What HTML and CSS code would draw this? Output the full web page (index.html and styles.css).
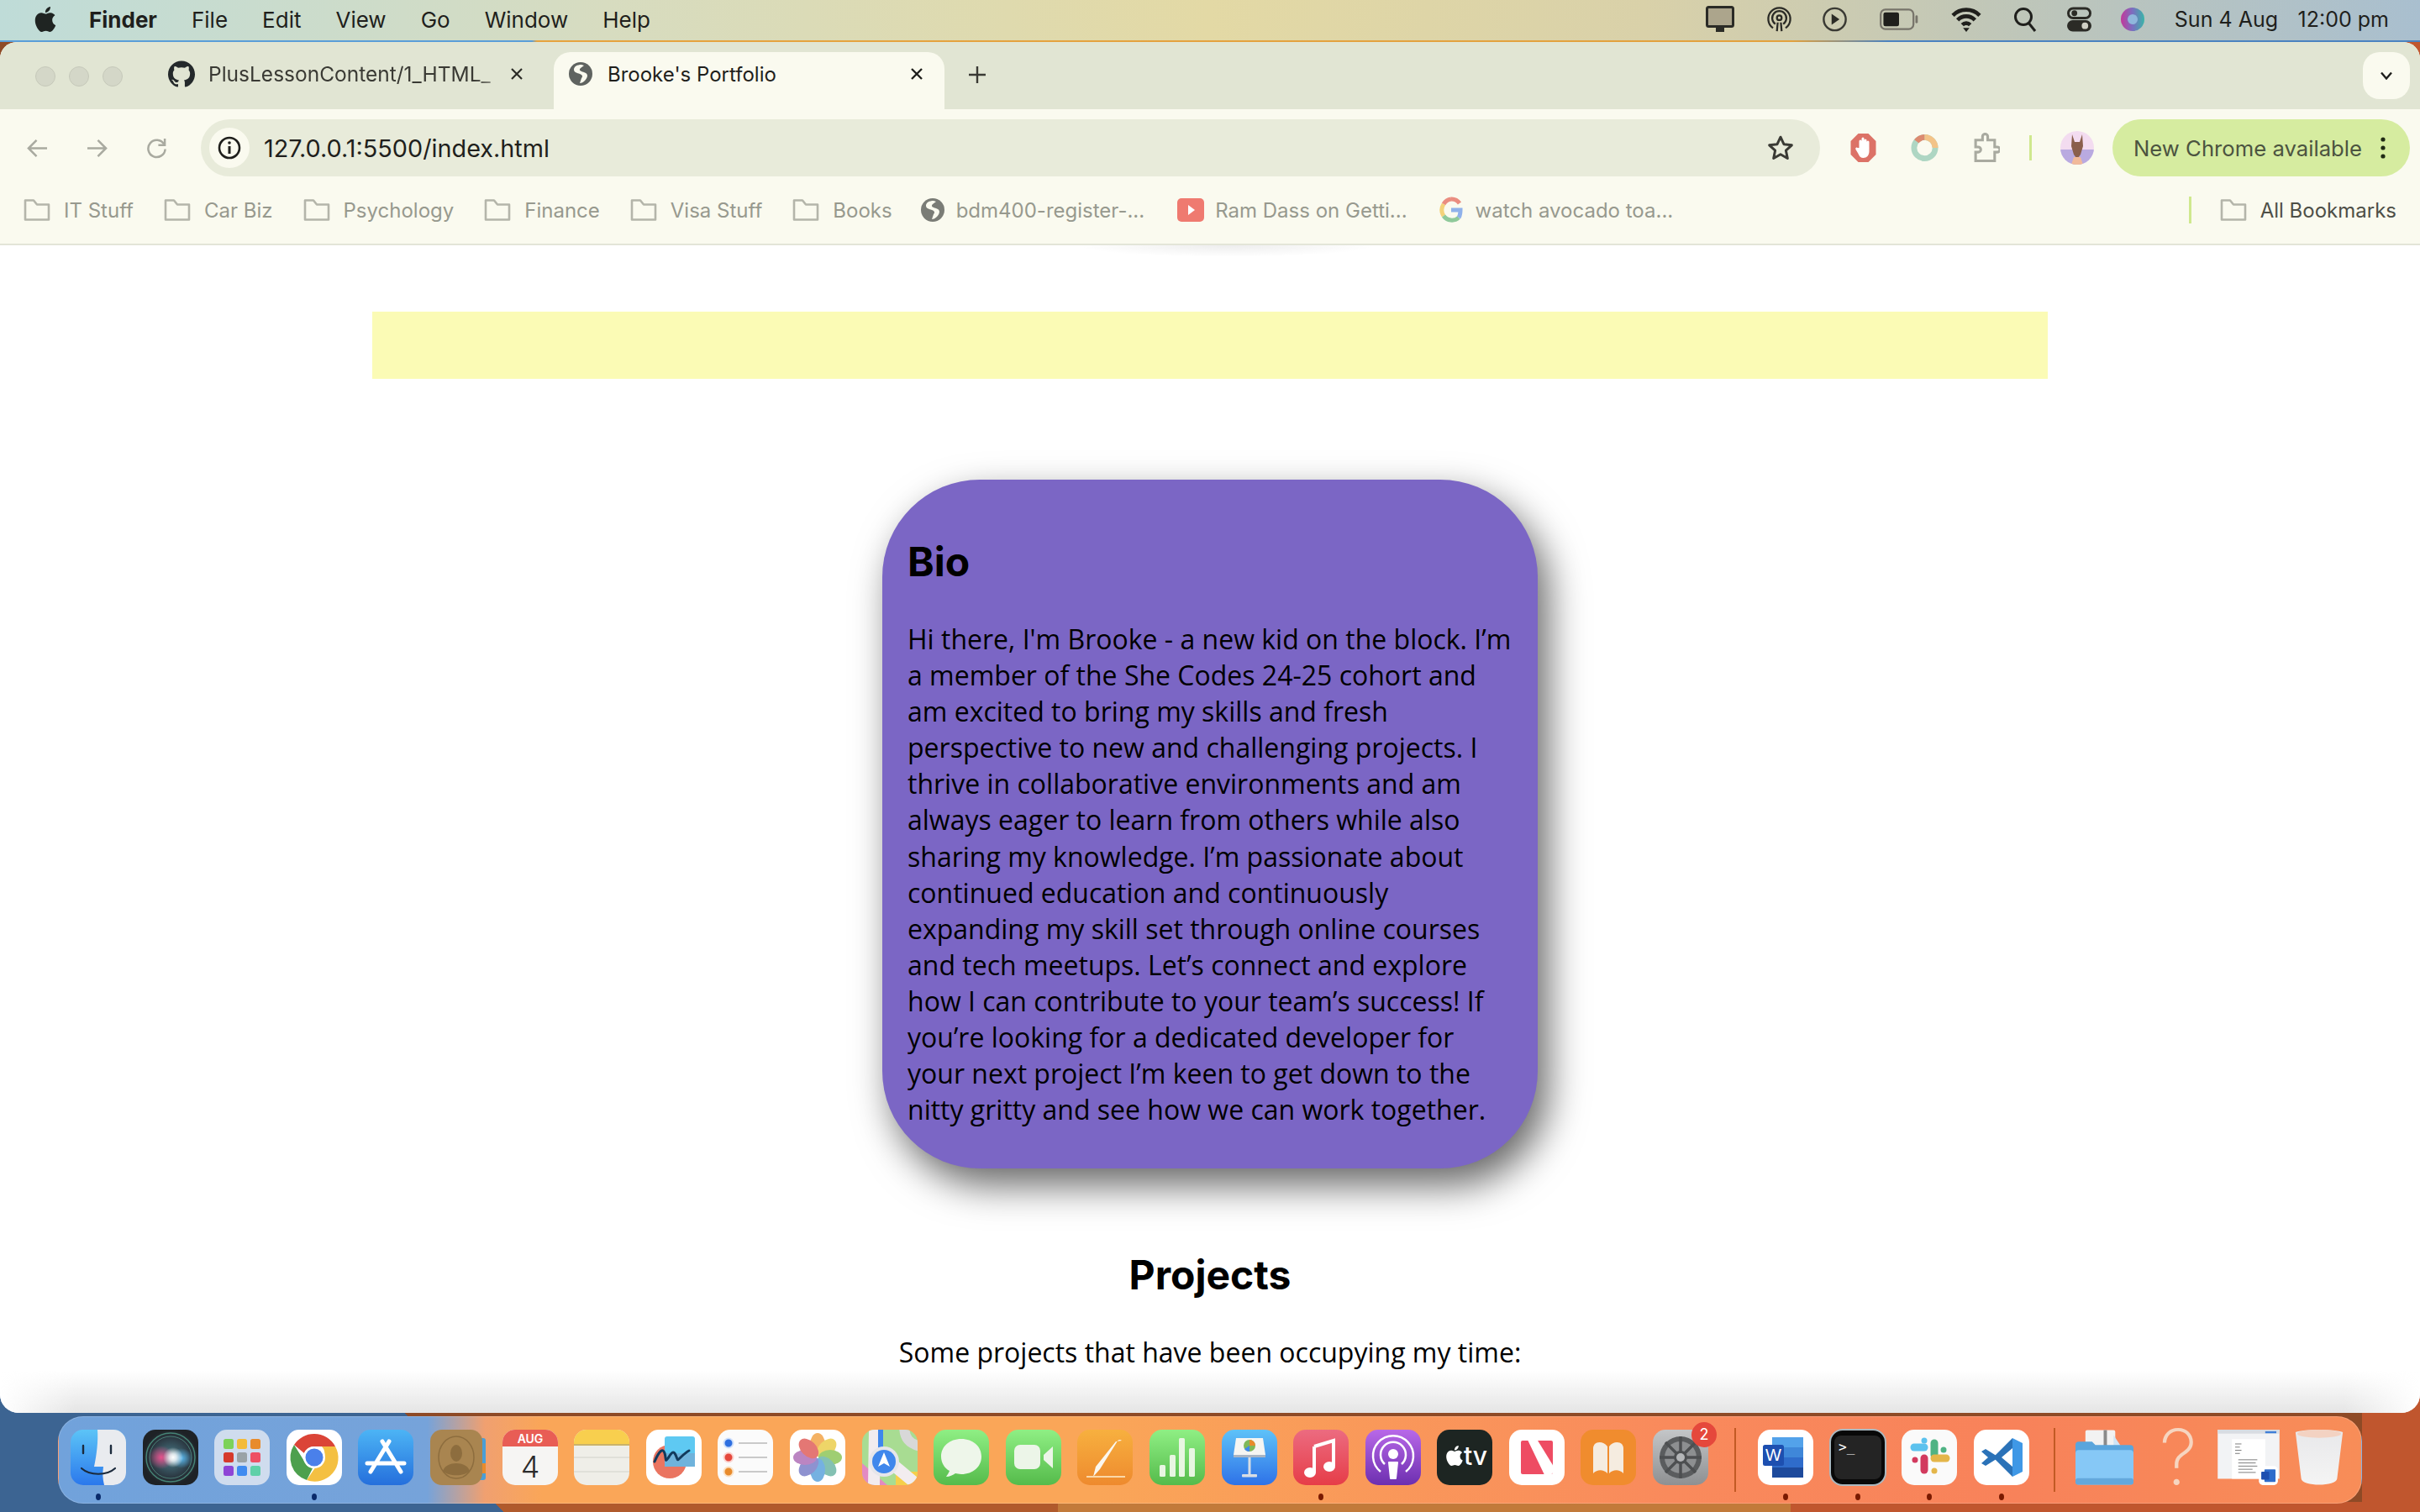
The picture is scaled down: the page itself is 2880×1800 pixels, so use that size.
FILE: index.html
```html
<!DOCTYPE html>
<html lang="en">

<head>
    <meta charset="UTF-8">
    <title>Brooke's Portfolio</title>
    <link rel="stylesheet" href="styles.css">
</head>

<body>
    <svg class="defs" width="0" height="0">
        <symbol id="folder" viewBox="0 0 32 32">
            <path d="M2 4.5h10l4 5h14v18H2z" fill="none" stroke="currentColor" stroke-width="2.6" stroke-linejoin="round"/>
        </symbol>
        <symbol id="globe" viewBox="0 0 28 28">
            <circle cx="14" cy="14" r="14" fill="currentColor"/>
            <path d="M15 3c-5 0-9 2-9 6 0 3 4 4 7 5 3 1 4 3 2 5l-2 6c4 0 9-5 9-9 0-3-4-4-7-5-2-1-3-2-1-4l4-3z" fill="#fafaef"/>
        </symbol>
    </svg>

    <!-- menu bar -->
    <div class="menubar">
        <div class="menu-left">
            <svg class="apple" viewBox="0 0 24 24"><path d="M12.152 6.896c-.948 0-2.415-1.078-3.96-1.04-2.04.027-3.91 1.183-4.961 3.014-2.117 3.675-.546 9.103 1.519 12.09 1.013 1.454 2.208 3.09 3.792 3.039 1.52-.065 2.09-.987 3.935-.987 1.831 0 2.35.987 3.96.948 1.637-.026 2.676-1.48 3.676-2.948 1.156-1.688 1.636-3.325 1.662-3.415-.039-.013-3.182-1.221-3.22-4.857-.026-3.04 2.48-4.494 2.597-4.559-1.429-2.09-3.623-2.324-4.39-2.376-2-.156-3.675 1.09-4.61 1.09zM15.53 3.83c.843-1.012 1.4-2.427 1.245-3.83-1.207.052-2.662.805-3.532 1.818-.78.896-1.454 2.338-1.273 3.714 1.338.104 2.715-.688 3.559-1.701"/></svg>
            <span class="menu-app">Finder</span>
            <span>File</span>
            <span>Edit</span>
            <span>View</span>
            <span>Go</span>
            <span>Window</span>
            <span>Help</span>
        </div>
        <div class="menu-right">
            <svg class="st-display" viewBox="0 0 34 32"><rect x="1.5" y="1.5" width="31" height="23" rx="2" fill="#aca58c" stroke="#2b2b26" stroke-width="3"/><rect x="12" y="25" width="10" height="6" fill="#2b2b26"/></svg>
            <svg class="st-air" viewBox="0 0 32 32" fill="none" stroke="#2b2b26" stroke-width="2.4"><circle cx="16" cy="14" r="3"/><path d="M11 22a9 9 0 1 1 10 0M8 27a14 14 0 1 1 16 0"/><path d="M14 20l-1 11M18 20l1 11"/></svg>
            <svg class="st-play" viewBox="0 0 32 32"><circle cx="16" cy="16" r="14" fill="none" stroke="#3a3a34" stroke-width="2.6"/><path d="M12 9l10 7-10 7z" fill="#2b2b26"/></svg>
            <svg class="st-battery" viewBox="0 0 50 28"><rect x="1.5" y="1.5" width="42" height="25" rx="6" fill="none" stroke="#77746a" stroke-width="2.4"/><rect x="5" y="5" width="20" height="18" rx="2.5" fill="#1f1f1c"/><rect x="46" y="9" width="3" height="10" rx="1.5" fill="#77746a"/></svg>
            <svg class="st-wifi" viewBox="0 0 40 32" fill="none" stroke="#1f1f1c" stroke-width="5"><path d="M3 11a24 24 0 0 1 34 0M9 17a15 15 0 0 1 22 0M15 23a7 7 0 0 1 10 0"/><path d="M16 27h8l-4 5z" fill="#1f1f1c" stroke="none"/></svg>
            <svg class="st-search" viewBox="0 0 28 30" fill="none" stroke="#1f1f1c" stroke-width="3"><circle cx="12" cy="12" r="9.5"/><path d="M18 19l8 10"/></svg>
            <svg class="st-control" viewBox="0 0 30 30"><rect x="1.5" y="1.5" width="27" height="12" rx="6" fill="none" stroke="#2b2b26" stroke-width="3"/><circle cx="9" cy="7.5" r="3.5" fill="#2b2b26"/><rect y="16" width="30" height="14" rx="7" fill="#2b2b26"/><circle cx="22" cy="23" r="4" fill="#cfcfc4"/></svg>
            <svg class="st-siri" viewBox="0 0 28 30"><defs><linearGradient id="siriBar" x1="0" x2="1"><stop offset="0" stop-color="#c2399b"/><stop offset=".5" stop-color="#7a6fc0"/><stop offset="1" stop-color="#38b5a8"/></linearGradient></defs><circle cx="14" cy="15" r="14" fill="url(#siriBar)"/><circle cx="14" cy="15" r="6" fill="#8fb7dc"/></svg>
            <span class="clock">Sun 4 Aug</span>
            <span>12:00 pm</span>
        </div>
    </div>

    <div class="window">
        <!-- tabs -->
        <div class="tabstrip">
            <div class="lights"><i></i><i></i><i></i></div>
            <div class="tab">
                <svg class="tab-icon" viewBox="0 0 24 24"><path fill="#24292b" d="M12 .297c-6.63 0-12 5.373-12 12 0 5.303 3.438 9.8 8.205 11.385.6.113.82-.258.82-.577 0-.285-.01-1.04-.015-2.04-3.338.724-4.042-1.61-4.042-1.61C4.422 18.07 3.633 17.7 3.633 17.7c-1.087-.744.084-.729.084-.729 1.205.084 1.838 1.236 1.838 1.236 1.07 1.835 2.809 1.305 3.495.998.108-.776.417-1.305.76-1.605-2.665-.3-5.466-1.332-5.466-5.93 0-1.31.465-2.38 1.235-3.22-.135-.303-.54-1.523.105-3.176 0 0 1.005-.322 3.3 1.23.96-.267 1.98-.399 3-.405 1.02.006 2.04.138 3 .405 2.28-1.552 3.285-1.23 3.285-1.23.645 1.653.24 2.873.12 3.176.765.84 1.23 1.91 1.23 3.22 0 4.61-2.805 5.625-5.475 5.92.42.36.81 1.096.81 2.22 0 1.606-.015 2.896-.015 3.286 0 .315.21.69.825.57C20.565 22.092 24 17.592 24 12.297c0-6.627-5.373-12-12-12"/></svg>
                <span class="tab-title tab-title-fade">PlusLessonContent/1_HTML_</span>
                <svg class="tab-close" viewBox="0 0 16 16"><path d="M2 2l12 12M14 2L2 14" stroke="#2b2b26" stroke-width="2.2"/></svg>
            </div>
            <div class="tab tab-active">
                <svg class="tab-icon tab-globe"><use href="#globe"/></svg>
                <span class="tab-title">Brooke's Portfolio</span>
                <svg class="tab-close" viewBox="0 0 16 16"><path d="M2 2l12 12M14 2L2 14" stroke="#1f1f1c" stroke-width="2.4"/></svg>
            </div>
            <svg class="tab-new" viewBox="0 0 22 22"><path d="M11 1v20M1 11h20" stroke="#3a3a34" stroke-width="2.4"/></svg>
            <div class="tab-search">
                <svg viewBox="0 0 16 10"><path d="M2 1.5l6 7 6-7" fill="none" stroke="#1f1f1c" stroke-width="2.4"/></svg>
            </div>
        </div>

        <!-- toolbar -->
        <div class="toolbar">
            <svg class="nav-btn" viewBox="0 0 26 24" fill="none" stroke="#a9aaa0" stroke-width="2.6"><path d="M25 12H3M12 2L2 12l10 10"/></svg>
            <svg class="nav-btn" viewBox="0 0 26 24" fill="none" stroke="#a9aaa0" stroke-width="2.6"><path d="M1 12h22M14 2l10 10-10 10"/></svg>
            <svg class="nav-btn" viewBox="0 0 26 26" fill="none" stroke="#a9aaa0" stroke-width="2.6"><path d="M22 8a10.5 10.5 0 1 0 1.5 6"/><path d="M23 1v8h-8"/></svg>
            <div class="omnibox">
                <span class="site-info">
                    <svg viewBox="0 0 28 28"><circle cx="14" cy="14" r="12" fill="none" stroke="#1f1f1c" stroke-width="2.6"/><path d="M14 12v9" stroke="#1f1f1c" stroke-width="3"/><circle cx="14" cy="8" r="1.8" fill="#1f1f1c"/></svg>
                </span>
                <span class="url">127.0.0.1:5500/index.html</span>
                <svg class="star" viewBox="0 0 30 30"><path d="M15 3l3.7 8 8.8 1-6.5 6 1.8 8.7L15 22.3 7.2 26.7 9 18l-6.5-6 8.8-1z" fill="none" stroke="#3a3a34" stroke-width="2.8" stroke-linejoin="round"/></svg>
            </div>
            <div class="extensions">
                <svg viewBox="0 0 32 36"><path d="M10 1h12l9 9v16l-9 9H10l-9-9V10z" fill="#dc7267"/><path d="M11 18v-8a1.500 1.500 0 0 1 3 0V7a1.500 1.500 0 0 1 3 0v2a1.500 1.500 0 0 1 3 0v2a1.500 1.500 0 0 1 3 0v11c0 5-3 8-7 8-3 0-5-2-6-5l-3-5c-1-2 1-3 2-2z" fill="#fff"/></svg>
                <svg viewBox="0 0 34 34" fill="none" stroke-width="7"><circle cx="17" cy="17" r="13" stroke="#aed6c3"/><path d="M7 9a13 13 0 0 1 10-5" stroke="#dc8a70"/><path d="M17 4a13 13 0 0 1 13 13" stroke="#f3c388"/></svg>
                <svg viewBox="0 0 32 34" fill="none" stroke="#a9aaa0" stroke-width="3"><path d="M4 8h8V4a3 3 0 0 1 6 0v4h8v8h3a3 3 0 0 1 0 6h-3v10H4V22h3a3 3 0 0 0 0-6H4z"/></svg>
                <i class="toolbar-sep"></i>
                <svg class="avatar" viewBox="0 0 40 40"><defs><clipPath id="avClip"><circle cx="20" cy="20" r="20"/></clipPath></defs><g clip-path="url(#avClip)"><rect width="40" height="40" fill="#f3dcf0"/><rect y="22" width="40" height="18" fill="#b9aae0"/><path d="M14 4l3 9h6l3-9 1 14-3 10-3 4h-2l-3-4-3-10z" fill="#8a5f4c"/><path d="M16 31h8l3 9H13z" fill="#f1b99a"/></g></svg>
            </div>
            <div class="update-pill">
                <span>New Chrome available</span>
                <svg viewBox="0 0 6 26"><circle cx="3" cy="3" r="2.6"/><circle cx="3" cy="13" r="2.6"/><circle cx="3" cy="23" r="2.6"/></svg>
            </div>
        </div>

        <!-- bookmarks -->
        <div class="bookmarks">
            <span class="bm"><svg class="bm-icon"><use href="#folder"/></svg>IT Stuff</span>
            <span class="bm"><svg class="bm-icon"><use href="#folder"/></svg>Car Biz</span>
            <span class="bm"><svg class="bm-icon"><use href="#folder"/></svg>Psychology</span>
            <span class="bm"><svg class="bm-icon"><use href="#folder"/></svg>Finance</span>
            <span class="bm"><svg class="bm-icon"><use href="#folder"/></svg>Visa Stuff</span>
            <span class="bm"><svg class="bm-icon"><use href="#folder"/></svg>Books</span>
            <span class="bm"><svg class="bm-icon bm-globe"><use href="#globe"/></svg>bdm400-register-...</span>
            <span class="bm"><svg class="bm-icon bm-yt" viewBox="0 0 32 28"><rect width="32" height="28" rx="5" fill="#ef7a70"/><path d="M13 8l8 6-8 6z" fill="#fff"/></svg>Ram Dass on Getti...</span>
            <span class="bm"><svg class="bm-icon bm-g" viewBox="0 0 28 32" fill="none" stroke-width="5"><path d="M24 8a11.500 11.500 0 0 0-10-5" stroke="#ea8d80"/><path d="M14 3a12 12 0 0 0-9 6" stroke="#ea8d80"/><path d="M5 9a13 13 0 0 0 0 14" stroke="#f3d27a"/><path d="M5 23a12 12 0 0 0 18 2" stroke="#8fc99a"/><path d="M23 25c2-3 2-6 2-9H14" stroke="#8fb1ea"/></svg>watch avocado toa...</span>
            <div class="bm-right">
                <i class="bm-sep"></i>
                <span class="bm bm-all"><svg class="bm-icon"><use href="#folder"/></svg>All Bookmarks</span>
            </div>
        </div>

        <!-- page -->
        <div class="page">
            <div class="nav-shadow"></div>
            <div class="banner"></div>
            <section class="bio-card">
                <h2 class="bio-title">Bio</h2>
                <p class="bio-text">Hi there, I'm Brooke - a new kid on the block. I’m a member of the She Codes 24-25 cohort and am excited to bring my skills and fresh perspective to new and challenging projects. I thrive in collaborative environments and am always eager to learn from others while also sharing my knowledge. I’m passionate about continued education and continuously expanding my skill set through online courses and tech meetups. Let’s connect and explore how I can contribute to your team’s success! If you’re looking for a dedicated developer for your next project I’m keen to get down to the nitty gritty and see how we can work together.</p>
            </section>
            <h2 class="projects-title">Projects</h2>
            <p class="projects-text">Some projects that have been occupying my time:</p>
            <div class="page-fade"></div>
        </div>
    </div>

    <!-- dock -->
    <div class="dock">
        <div class="dock-item running"><svg viewBox="0 0 66 66"><defs><linearGradient id="fin" x1="0" y1="0" x2="0" y2="1"><stop offset="0" stop-color="#5cc4f7"/><stop offset="1" stop-color="#2b78ec"/></linearGradient></defs><rect width="66" height="66" rx="15" fill="url(#fin)"/><path d="M32 0h19a15 15 0 0 1 15 15v36a15 15 0 0 1-15 15H40c-2-8-2-14-1-22H28c3-14 5-30 4-44z" fill="#e9ebef"/><path d="M15 19v9M48 19v9" stroke="#1b2a3c" stroke-width="2.4" stroke-linecap="round"/><path d="M13 46c10 9 30 9 40 0" fill="none" stroke="#1b2a3c" stroke-width="2.2" stroke-linecap="round"/></svg></div>
        <div class="dock-item"><svg viewBox="0 0 66 66"><defs><radialGradient id="siriBg"><stop offset="0" stop-color="#4a7f8c"/><stop offset=".7" stop-color="#2c3a44"/><stop offset="1" stop-color="#1e2226"/></radialGradient><radialGradient id="siriPink"><stop offset="0" stop-color="#e8508c"/><stop offset="1" stop-color="#e8508c" stop-opacity="0"/></radialGradient><radialGradient id="siriBlue"><stop offset="0" stop-color="#58b4ea"/><stop offset="1" stop-color="#58b4ea" stop-opacity="0"/></radialGradient><radialGradient id="siriGlow"><stop offset="0" stop-color="#fff"/><stop offset=".35" stop-color="#fff" stop-opacity=".8"/><stop offset="1" stop-color="#fff" stop-opacity="0"/></radialGradient></defs><rect width="66" height="66" rx="15" fill="url(#siriBg)"/><circle cx="33" cy="33" r="29" fill="none" stroke="#4f9a86" stroke-width="1.500" opacity=".8"/><circle cx="33" cy="33" r="25" fill="none" stroke="#5fae9a" stroke-width="1" opacity=".6"/><ellipse cx="22" cy="33" rx="15" ry="14" fill="url(#siriPink)"/><ellipse cx="46" cy="34" rx="13" ry="12" fill="url(#siriBlue)"/><circle cx="36" cy="33" r="12" fill="url(#siriGlow)"/></svg></div>
        <div class="dock-item"><svg viewBox="0 0 66 66"><rect width="66" height="66" rx="15" fill="#cfdcee"/><rect x="11" y="11" width="12" height="12" rx="2.500" fill="#7cd25a"/><rect x="27" y="11" width="12" height="12" rx="2.500" fill="#f3bb3a"/><rect x="43" y="11" width="12" height="12" rx="2.500" fill="#e88b2c"/><rect x="11" y="27" width="12" height="12" rx="2.500" fill="#d63a2c"/><rect x="27" y="27" width="12" height="12" rx="2.500" fill="#9aa3a6"/><rect x="43" y="27" width="12" height="12" rx="2.500" fill="#ee4f63"/><rect x="11" y="43" width="12" height="12" rx="2.500" fill="#8e45d6"/><rect x="27" y="43" width="12" height="12" rx="2.500" fill="#3f8bf0"/><rect x="43" y="43" width="12" height="12" rx="2.500" fill="#5fd0a8"/></svg></div>
        <div class="dock-item running"><svg viewBox="0 0 66 66"><rect width="66" height="66" rx="15" fill="#fff"/><path d="M33 5a28 28 0 0 1 25 15H33a13 13 0 0 0-12 8L9 18A28 28 0 0 1 33 5z" fill="#db4437"/><path d="M9 18l13 21a13 13 0 0 0 9 7L24 60A28 28 0 0 1 9 18z" fill="#4da04e"/><path d="M58 20a28 28 0 0 1-34 40l13-19a13 13 0 0 0 5-21z" fill="#f4c042"/><circle cx="33" cy="33" r="13" fill="#fff"/><circle cx="33" cy="33" r="10.500" fill="#4a80ea"/></svg></div>
        <div class="dock-item"><svg viewBox="0 0 66 66"><defs><linearGradient id="app" x1="0" y1="0" x2="0" y2="1"><stop offset="0" stop-color="#4cb4f5"/><stop offset="1" stop-color="#256fdc"/></linearGradient></defs><rect width="66" height="66" rx="15" fill="url(#app)"/><path d="M29 14l22 36M37 14L15 50M11 40h44" stroke="#fff" stroke-width="5" stroke-linecap="round" fill="none"/></svg></div>
        <div class="dock-item"><svg viewBox="0 0 66 66"><rect x="56" y="10" width="10" height="50" rx="3" fill="#4a9ed6"/><rect x="58" y="40" width="8" height="12" fill="#e88b2c"/><rect width="62" height="66" rx="14" fill="#a98550"/><ellipse cx="31" cy="33" rx="21" ry="25" fill="none" stroke="#8d6d3e" stroke-width="1.500"/><ellipse cx="31" cy="28" rx="7" ry="10" fill="#8d6d3e"/><path d="M15 49c4-12 28-12 32 0-6 7-26 7-32 0z" fill="#8d6d3e"/></svg></div>
        <div class="dock-item"><svg viewBox="0 0 66 66"><rect width="66" height="66" rx="15" fill="#f6f5f3"/><path d="M0 20V15A15 15 0 0 1 15 0h36a15 15 0 0 1 15 15v5z" fill="#e85d55"/><text x="33" y="16" class="cal-month">AUG</text><text x="33" y="57" class="cal-day">4</text></svg></div>
        <div class="dock-item"><svg viewBox="0 0 66 66"><rect width="66" height="66" rx="15" fill="#efeee8"/><path d="M0 17V15A15 15 0 0 1 15 0h36a15 15 0 0 1 15 15v2z" fill="#f8cf4e"/><rect y="17" width="66" height="2" fill="#c9b36a"/><path d="M0 33h66M0 50h66" stroke="#dcdbd4" stroke-width="1.500"/></svg></div>
        <div class="dock-item"><svg viewBox="0 0 66 66"><rect width="66" height="66" rx="15" fill="#fff"/><circle cx="28" cy="38" r="20" fill="#ea7561"/><rect x="22" y="8" width="36" height="36" rx="3" fill="#5ec9f2"/><path d="M22 44V28h36v16z" fill="#6fb3dc"/><path d="M10 38c6-14 10-16 12-10s0 12 4 6 6-10 9-4 1 8 6 3 6-6 10-8" fill="none" stroke="#123a5c" stroke-width="3" stroke-linecap="round"/></svg></div>
        <div class="dock-item"><svg viewBox="0 0 66 66"><rect width="66" height="66" rx="15" fill="#fbfbfb"/><circle cx="13" cy="16" r="5.500" fill="#2e6fe0" stroke="#cfe0fb" stroke-width="2"/><circle cx="13" cy="33" r="5.500" fill="#e5483c" stroke="#fbd4d0" stroke-width="2"/><circle cx="13" cy="50" r="5.500" fill="#e88b2c" stroke="#fbe2c6" stroke-width="2"/><path d="M25 16h34M25 33h34M25 50h34" stroke="#b9b9b9" stroke-width="1.500"/></svg></div>
        <div class="dock-item"><svg viewBox="0 0 66 66"><rect width="66" height="66" rx="15" fill="#fff"/><g opacity=".85"><ellipse cx="33" cy="18" rx="9" ry="14" fill="#f3a54a"/><ellipse cx="33" cy="18" rx="9" ry="14" fill="#ecce4e" transform="rotate(45 33 33)"/><ellipse cx="33" cy="18" rx="9" ry="14" fill="#8fc65a" transform="rotate(90 33 33)"/><ellipse cx="33" cy="18" rx="9" ry="14" fill="#6fb7a6" transform="rotate(135 33 33)"/><ellipse cx="33" cy="18" rx="9" ry="14" fill="#5ea4dc" transform="rotate(180 33 33)"/><ellipse cx="33" cy="18" rx="9" ry="14" fill="#7b7fc8" transform="rotate(225 33 33)"/><ellipse cx="33" cy="18" rx="9" ry="14" fill="#b070b8" transform="rotate(270 33 33)"/><ellipse cx="33" cy="18" rx="9" ry="14" fill="#e0605c" transform="rotate(315 33 33)"/></g></svg></div>
        <div class="dock-item"><svg viewBox="0 0 66 66"><defs><clipPath id="mapClip"><rect width="66" height="66" rx="15"/></clipPath></defs><g clip-path="url(#mapClip)"><rect width="66" height="66" fill="#a8dc92"/><path d="M0 40l30 26H0z" fill="#e38ac2"/><path d="M40 50l26 0v16H40z" fill="#f5cf4a"/><path d="M50-5c0 15 6 22 20 25" fill="none" stroke="#d8d8d8" stroke-width="12"/><path d="M15 0l-1 66M30 36l36 30" stroke="#f2ecef" stroke-width="14"/><path d="M22 0v30" stroke="#3f87ec" stroke-width="6"/><circle cx="26" cy="38" r="18" fill="#e6e6ea"/><circle cx="26" cy="38" r="14" fill="#3f87ec"/><path d="M26 27l7 17-7-4-7 4z" fill="#fff"/></g></svg></div>
        <div class="dock-item"><svg viewBox="0 0 66 66"><defs><linearGradient id="grn" x1="0" y1="0" x2="0" y2="1"><stop offset="0" stop-color="#8fef84"/><stop offset="1" stop-color="#55bb4b"/></linearGradient></defs><rect width="66" height="66" rx="15" fill="url(#grn)"/><path d="M33 11c-14 0-24 9-24 21 0 7 4 14 10 17-1 3-3 5-4 7 4 0 8-2 11-4 2 0 4 1 7 1 14 0 24-9 24-21S47 11 33 11z" fill="#eef6ea"/></svg></div>
        <div class="dock-item"><svg viewBox="0 0 66 66"><rect width="66" height="66" rx="15" fill="url(#grn)"/><rect x="10" y="18" width="31" height="29" rx="7" fill="#ecf5e8"/><path d="M45 30l11-10v26L45 36z" fill="#ecf5e8"/></svg></div>
        <div class="dock-item"><svg viewBox="0 0 66 66"><defs><linearGradient id="pgs" x1="0" y1="0" x2="0" y2="1"><stop offset="0" stop-color="#f7b03f"/><stop offset="1" stop-color="#ee8a2e"/></linearGradient></defs><rect width="66" height="66" rx="15" fill="url(#pgs)"/><path d="M53 13c-2-2-5-1-6 2L27 47l-8 9 3-12 24-30z" fill="#fbf7ef"/><path d="M11 56h46" stroke="#fbd8a8" stroke-width="2"/></svg></div>
        <div class="dock-item"><svg viewBox="0 0 66 66"><rect width="66" height="66" rx="15" fill="url(#grn)"/><rect x="12" y="42" width="7" height="14" rx="1.500" fill="#e8f6e2"/><rect x="24" y="30" width="7" height="26" rx="1.500" fill="#e8f6e2"/><rect x="35" y="10" width="7" height="46" rx="1.500" fill="#e8f6e2"/><rect x="47" y="22" width="7" height="34" rx="1.500" fill="#e8f6e2"/></svg></div>
        <div class="dock-item"><svg viewBox="0 0 66 66"><defs><linearGradient id="key" x1="0" y1="0" x2="0" y2="1"><stop offset="0" stop-color="#5ec2f8"/><stop offset="1" stop-color="#2e72e8"/></linearGradient></defs><rect width="66" height="66" rx="15" fill="url(#key)"/><path d="M17 10h32l3 20H14z" fill="#f5f5f2"/><rect x="14" y="30" width="38" height="3" fill="#a8b4c4"/><circle cx="33" cy="19" r="7" fill="#7fb859"/><path d="M33 19V12a7 7 0 0 1 7 7z" fill="#e88b2c"/><path d="M33 19v7a7 7 0 0 1-6-3z" fill="#3f87ec"/><rect x="31.500" y="33" width="3" height="21" fill="#d8dde4"/><rect x="24" y="53" width="18" height="3.500" rx="1" fill="#d8dde4"/></svg></div>
        <div class="dock-item running"><svg viewBox="0 0 66 66"><defs><linearGradient id="mus" x1="0" y1="0" x2="0" y2="1"><stop offset="0" stop-color="#ec6b80"/><stop offset="1" stop-color="#e63d48"/></linearGradient></defs><rect width="66" height="66" rx="15" fill="url(#mus)"/><path d="M25 20l23-7v30" fill="none" stroke="#fff" stroke-width="4"/><path d="M25 20v31" fill="none" stroke="#fff" stroke-width="4"/><ellipse cx="20" cy="51" rx="7" ry="6" fill="#fff"/><ellipse cx="43" cy="44" rx="7" ry="6" fill="#fff"/></svg></div>
        <div class="dock-item"><svg viewBox="0 0 66 66"><defs><linearGradient id="pod" x1="0" y1="0" x2="0" y2="1"><stop offset="0" stop-color="#b868e8"/><stop offset="1" stop-color="#6d2fb0"/></linearGradient></defs><rect width="66" height="66" rx="15" fill="url(#pod)"/><path d="M18 50a24 24 0 1 1 30 0M23 41a15 15 0 1 1 20 0" fill="none" stroke="#fff" stroke-width="2.500"/><circle cx="33" cy="29" r="6" fill="#fff"/><path d="M28 39h10l-2 19h-6z" fill="#fff" stroke="#fff" stroke-linejoin="round" stroke-width="2"/></svg></div>
        <div class="dock-item"><svg viewBox="0 0 66 66"><rect width="66" height="66" rx="15" fill="#1d2522"/><g transform="translate(9 19)" fill="#fff"><path d="M12.152 6.896c-.948 0-2.415-1.078-3.96-1.04-2.04.027-3.91 1.183-4.961 3.014-2.117 3.675-.546 9.103 1.519 12.09 1.013 1.454 2.208 3.09 3.792 3.039 1.52-.065 2.09-.987 3.935-.987 1.831 0 2.35.987 3.96.948 1.637-.026 2.676-1.48 3.676-2.948 1.156-1.688 1.636-3.325 1.662-3.415-.039-.013-3.182-1.221-3.22-4.857-.026-3.04 2.48-4.494 2.597-4.559-1.429-2.09-3.623-2.324-4.39-2.376-2-.156-3.675 1.09-4.61 1.09zM15.53 3.83c.843-1.012 1.4-2.427 1.245-3.83-1.207.052-2.662.805-3.532 1.818-.78.896-1.454 2.338-1.273 3.714 1.338.104 2.715-.688 3.559-1.701"/></g><text x="46" y="42" class="tv-label">tv</text></svg></div>
        <div class="dock-item"><svg viewBox="0 0 66 66"><defs><clipPath id="newsClip"><rect x="14" y="13" width="38" height="40" rx="2"/></clipPath></defs><rect width="66" height="66" rx="15" fill="#fff"/><rect x="14" y="13" width="38" height="40" rx="2" fill="#ee4c63"/><g clip-path="url(#newsClip)"><path d="M20 8h11l27 44v10H46z" fill="#fff"/></g></svg></div>
        <div class="dock-item"><svg viewBox="0 0 66 66"><rect width="66" height="66" rx="15" fill="#f08c2e"/><path d="M32 20c-4-6-12-6-15-3-1 1-2 3-2 5v30c5-5 12-5 17 0zM34 20c4-6 12-6 15-3 1 1 2 3 2 5v30c-5-5-12-5-17 0z" fill="#f5ece0"/></svg></div>
        <div class="dock-item badge-host"><svg viewBox="0 0 66 66"><defs><linearGradient id="gear" x1="0" y1="0" x2="0" y2="1"><stop offset="0" stop-color="#c4c6c8"/><stop offset="1" stop-color="#8e9092"/></linearGradient></defs><rect width="66" height="66" rx="15" fill="url(#gear)"/><circle cx="33" cy="33" r="25" fill="#5a5c5e"/><circle cx="33" cy="33" r="19" fill="#8d8f91"/><circle cx="33" cy="33" r="8" fill="#4d4f51"/><path d="M33 8v50M8 33h50M15 15l36 36M51 15L15 51" stroke="#4d4f51" stroke-width="3.500"/><circle cx="33" cy="33" r="5" fill="#b4b6b8"/></svg><span class="badge">2</span></div>
        <i class="dock-sep"></i>
        <div class="dock-item running"><svg viewBox="0 0 66 66"><rect width="66" height="66" rx="15" fill="#fff"/><rect x="17" y="9" width="37" height="48" rx="2.500" fill="#2f6ccb"/><rect x="17" y="9" width="37" height="12" fill="#53a2ea"/><rect x="17" y="21" width="37" height="12" fill="#3f87d9"/><rect x="17" y="45" width="37" height="12" fill="#1d4a9c"/><rect x="6" y="18" width="25" height="25" rx="2.500" fill="#1d4fb0"/><text x="18.500" y="37" class="word-w">W</text></svg></div>
        <div class="dock-item running"><svg viewBox="0 0 66 66"><rect width="66" height="66" rx="15" fill="#080808" stroke="#aab8bf" stroke-width="2"/><rect x="5" y="7" width="56" height="52" rx="8" fill="#242424"/><text x="10" y="26" class="term-prompt">&gt;_</text></svg></div>
        <div class="dock-item running"><svg viewBox="0 0 66 66"><rect width="66" height="66" rx="15" fill="#fafafa"/><g fill="none" stroke-width="9" stroke-linecap="round"><path d="M27 21H15" stroke="#5cc2ee"/><path d="M39 16v14" stroke="#4fb384"/><path d="M27 34v14" stroke="#d23a5e"/><path d="M39 34h14" stroke="#e4b64a"/></g><g stroke-width="7" stroke-linecap="round"><path d="M27 13h.01" stroke="#5cc2ee"/><path d="M50 24h.01" stroke="#4fb384"/><path d="M16 36h.01" stroke="#d23a5e"/><path d="M39 49h.01" stroke="#e4b64a"/></g></svg></div>
        <div class="dock-item running"><svg viewBox="0 0 66 66"><rect width="66" height="66" rx="15" fill="#fff"/><path d="M46 10l12 6v34l-12 6z" fill="#3f98e6"/><path d="M46 10L23 33l23 23V44L33 33l13-11z" fill="#2a72b8"/><path d="M9 26l5-3 16 10-16 10-5-3 8-7z" fill="#2a72b8"/></svg></div>
        <i class="dock-sep dock-sep-last"></i>
        <div class="dock-stack dock-folder"><svg viewBox="0 0 70 66"><rect x="12" y="0" width="36" height="30" rx="2" fill="#f2f2f2"/><path d="M34 0h4v22h-4z" fill="#8a8a8a"/><path d="M46 6l12 18H46z" fill="#cfe4f5"/><path d="M0 18a4 4 0 0 1 4-4h16l4 4h42a4 4 0 0 1 4 4v8H0z" fill="#5aa5dc"/><rect y="24" width="70" height="42" rx="4" fill="#86c8f6"/><rect y="58" width="70" height="8" rx="3" fill="#64a8dc"/></svg></div>
        <div class="dock-stack dock-missing">?</div>
        <div class="dock-stack dock-doc"><svg viewBox="0 0 78 70"><rect width="78" height="62" fill="#f2f3f5"/><rect width="78" height="5" fill="#d8dce2"/><rect x="60" y="2" width="14" height="2.500" fill="#3f7fd8"/><rect x="18" y="12" width="42" height="50" fill="#fff"/><path d="M22 18h8M22 22h6M22 26h8M22 30h6M26 38h24M26 42h22M26 46h24M26 50h18M26 54h22" stroke="#555" stroke-width=".8"/><rect x="52" y="46" width="24" height="24" rx="5" fill="#fff"/><rect x="59" y="50" width="14" height="16" rx="1" fill="#2f6ccb"/><rect x="55" y="53" width="10" height="10" rx="1" fill="#1d4fb0"/></svg></div>
        <div class="dock-stack dock-trash"><svg viewBox="0 0 58 68"><defs><linearGradient id="trash" x1="0" y1="0" x2="0" y2="1"><stop offset="0" stop-color="#e8e8ea"/><stop offset="1" stop-color="#f4f4f4"/></linearGradient></defs><path d="M0 3c10-4 48-4 58 0L51 60c-1 10-43 10-44 0z" fill="url(#trash)"/><ellipse cx="29" cy="5" rx="27" ry="5" fill="#f3d2c2"/></svg></div>
    </div>
</body>

</html>
```

FILE: styles.css
```css
* {
    box-sizing: border-box;
}

html,
body {
    margin: 0;
    height: 1800px;
    overflow: hidden;
}

body {
    width: 2880px;
    position: relative;
    background:
        linear-gradient(45deg, #3c6492 12.8%, transparent 12.8%),
        linear-gradient(90deg, #b05a2c 0, #b05a2c 43.7%, #c27a3a 43.7%, #c27a3a 74%, #c0562e 74%) bottom / 100% 12px no-repeat,
        linear-gradient(90deg, #8e4a26 0, #8e4a26 97.6%, #c0562e 97.6%);
    font-family: Inter, "Liberation Sans", sans-serif;
    color: #1f1f1c;
}

.defs {
    position: absolute;
}

.menubar {
    height: 50px;
    padding: 0 37px 2px 39px;
    display: flex;
    justify-content: space-between;
    align-items: center;
    font-size: 25px;
    background: linear-gradient(90deg, #bfdcd8 0, #d7dcc0 25%, #e3d9a5 50%, #d9d1a9 68%, #bcc5bb 85%, #a9bfcf 100%);
    border-bottom: 2px solid #e2a542;
    border-image: linear-gradient(90deg, #5a9ed8 0, #5a9ed8 22%, #e6a33f 22.2%, #e2a13e 74%, #4a82c0 78%, #4a82c0 100%) 1;
}

.menu-left {
    display: flex;
    align-items: center;
    gap: 41px;
    font-size: 26px;
}

.menu-app {
    font-weight: 700;
    margin-left: -4px;
}

.apple {
    width: 30px;
    height: 32px;
    fill: #1f2422;
}

.menu-right {
    display: flex;
    align-items: center;
    gap: 35.600px;
}

.menu-right .clock {
    margin-right: -12px;
    margin-left: 0;
}

.st-display {
    width: 34px;
    height: 32px;
    margin-right: 2px;
}

.st-air,
.st-play {
    width: 31px;
    height: 30px;
}

.st-battery {
    width: 50px;
    height: 26px;
}

.st-wifi {
    width: 40px;
    height: 30px;
}

.st-search {
    width: 28px;
    height: 30px;
}

.st-control {
    width: 29px;
    height: 30px;
}

.st-siri {
    width: 28px;
    height: 30px;
}

.window {
    height: 1632px;
    display: flex;
    flex-direction: column;
    border-radius: 20px 20px 22px 22px;
    overflow: hidden;
    background: #fff;
}

.tabstrip {
    height: 80px;
    flex: none;
    display: flex;
    align-items: flex-end;
    padding-left: 42px;
    background: #e1e5d3;
    position: relative;
}

.lights {
    display: flex;
    gap: 16px;
    align-self: flex-start;
    margin-top: 29px;
    margin-right: 54px;
}

.lights i {
    width: 24px;
    height: 24px;
    border-radius: 50%;
    background: #d4d7c8;
    border: 1px solid #c6c9ba;
}

.tab {
    height: 68px;
    display: flex;
    align-items: center;
    width: 459px;
    padding: 0 36px 16px 0;
    font-size: 24.500px;
    color: #3a3a34;
}

.tab-icon {
    width: 32px;
    height: 32px;
    margin-right: 16px;
    flex: none;
}

.tab-title {
    white-space: nowrap;
    flex: 1;
}

.tab-title-fade {
    -webkit-mask-image: linear-gradient(90deg, #000 88%, transparent 100%);
    mask-image: linear-gradient(90deg, #000 88%, transparent 100%);
}

.tab-close {
    width: 16px;
    height: 16px;
    flex: none;
}

.tab-active {
    width: 465px;
    padding: 0 25px 16px 18px;
    font-size: 24px;
    background: #fafaef;
    color: #1f1f1c;
    border-radius: 20px 20px 0 0;
}

.tab-globe {
    width: 28px;
    height: 28px;
    margin-right: 18px;
    color: #5f6360;
}

.tab-new {
    width: 22px;
    height: 22px;
    margin: 0 0 30px 28px;
}

.tab-search {
    position: absolute;
    right: 12px;
    top: 12px;
    width: 56px;
    height: 56px;
    border-radius: 20px;
    background: #fafaef;
    display: flex;
    align-items: center;
    justify-content: center;
}

.tab-search svg {
    width: 16px;
    height: 10px;
}

.toolbar {
    height: 92px;
    flex: none;
    display: flex;
    align-items: center;
    padding: 0 12px 0 32px;
    background: #fafaef;
}

.nav-btn {
    width: 25px;
    height: 25px;
    margin-right: 46px;
    flex: none;
}

.omnibox {
    width: 1927px;
    height: 68px;
    margin-left: -6px;
    border-radius: 34px;
    background: #e8ebda;
    display: flex;
    align-items: center;
    padding: 0 31px 0 10px;
    flex: none;
}

.site-info {
    width: 48px;
    height: 48px;
    border-radius: 24px;
    background: #fafaef;
    display: flex;
    align-items: center;
    justify-content: center;
}

.site-info svg {
    width: 28px;
    height: 28px;
}

.url {
    font-size: 28.800px;
    margin-left: 17px;
    flex: 1;
}

.star {
    width: 32px;
    height: 32px;
}

.extensions {
    flex: 1;
    display: flex;
    align-items: center;
    padding-left: 35px;
    gap: 40px;
}

.extensions svg {
    width: 33px;
    height: 36px;
}

.extensions .avatar {
    width: 40px;
    height: 40px;
    margin-left: -6px;
}

.toolbar-sep {
    width: 3px;
    height: 30px;
    background: #cfe88e;
    margin-left: -5px;
}

.update-pill {
    width: 354px;
    height: 68px;
    flex: none;
    border-radius: 34px;
    background: #d6eca0;
    display: flex;
    align-items: center;
    justify-content: space-between;
    padding: 0 29px 0 25px;
    font-size: 25.700px;
    color: #4c5440;
}

.update-pill svg {
    width: 6px;
    height: 26px;
    fill: #1f2a14;
}

.bookmarks {
    height: 70px;
    flex: none;
    display: flex;
    align-items: center;
    gap: 36px;
    padding: 0 28px 12px 28px;
    background: #fafaef;
    border-bottom: 2px solid #e3e5d8;
    font-size: 24px;
    color: #97998e;
}

.bm {
    display: flex;
    align-items: center;
    white-space: nowrap;
}

.bm-icon {
    width: 32px;
    height: 32px;
    margin-right: 16px;
    color: #b4b5aa;
    flex: none;
}

.bm-globe {
    width: 28px;
    height: 28px;
    margin-left: -2px;
    margin-right: 14px;
    color: #7a7c76;
}

.bm-yt {
    margin-left: 3px;
    margin-right: 13px;
}

.bm-g {
    width: 28px;
    margin-left: 2px;
    margin-right: 15px;
}

.bm-right {
    margin-left: auto;
    display: flex;
    align-items: center;
    gap: 34px;
}

.bm-sep {
    width: 3px;
    height: 32px;
    background: #cfe88e;
}

.bm-all {
    color: #4e4f47;
}

.page {
    flex: 1;
    position: relative;
    padding-top: 79px;
    background: #fff;
    color: #000;
    font-family: "Open Sans", sans-serif;
    text-align: center;
}

.nav-shadow {
    position: absolute;
    left: 1280px;
    top: 0;
    width: 360px;
    height: 14px;
    background: radial-gradient(ellipse at top, rgba(0, 0, 0, 0.07), transparent 70%);
}

.banner {
    width: 1994px;
    height: 80px;
    margin: 0 auto;
    background: #fbfbb5;
}

.bio-card {
    width: 780px;
    height: 820px;
    margin: 120px auto 0;
    padding: 61px 30px 0;
    border-radius: 116px;
    background: #7b66c5;
    box-shadow: 12px 20px 46px rgba(0, 0, 0, 0.6);
    text-align: left;
}

.bio-title {
    margin: 0 0 33px;
    font-family: Inter, sans-serif;
    font-size: 48px;
    font-weight: 700;
    line-height: 74px;
}

.bio-text {
    margin: 0;
    font-size: 32px;
    line-height: 43.100px;
}

.projects-title {
    margin: 95px 0 0;
    font-family: Inter, sans-serif;
    font-size: 48px;
    font-weight: 700;
    line-height: 64px;
}

.projects-text {
    margin: 38px 0 0;
    font-size: 32px;
    line-height: 44px;
}

.page-fade {
    position: absolute;
    left: 0;
    right: 0;
    bottom: 0;
    height: 50px;
    background: linear-gradient(rgba(229, 229, 229, 0), #e5e5e5);
    -webkit-mask-image: linear-gradient(90deg, transparent 0, #000 90px, #000 2790px, transparent 100%);
    mask-image: linear-gradient(90deg, transparent 0, #000 90px, #000 2790px, transparent 100%);
}

.dock {
    position: absolute;
    left: 69px;
    top: 1686px;
    width: 2742px;
    height: 104px;
    display: flex;
    align-items: flex-start;
    padding: 15px 0 0 14px;
    gap: 19.600px;
    border-radius: 30px;
    border: 1px solid rgba(255, 255, 255, 0.18);
    background: linear-gradient(90deg, #71a2db 0, #76a3da 16%, #f0a070 18.500%, #faa658 21%, #faa658 45%, #f98a5c 70%, #f8825a 85%, #f88d58 100%);
}

.dock-item {
    width: 66px;
    height: 66px;
    position: relative;
    flex: none;
}

.dock-item svg {
    display: block;
    width: 66px;
    height: 66px;
    overflow: visible;
}

.running::after {
    content: "";
    position: absolute;
    left: 30px;
    top: 76px;
    width: 6px;
    height: 8px;
    border-radius: 50%;
    background: #7a1a00;
}

.dock-item:nth-child(-n+4).running::after {
    background: #0a2a6a;
}

.badge {
    position: absolute;
    right: -10px;
    top: -9px;
    width: 30px;
    height: 30px;
    border-radius: 50%;
    background: #e5483c;
    color: #fff;
    font-size: 18px;
    line-height: 30px;
    text-align: center;
}

.dock-sep {
    width: 2px;
    height: 76px;
    flex: none;
    margin: -2px 7px 0 11px;
    background: #c25a24;
}

.dock-sep-last {
    margin: -2px 5px 0 9px;
}

.dock-stack {
    flex: none;
    height: 66px;
}

.dock-stack svg {
    display: block;
    width: 100%;
    height: 100%;
    overflow: visible;
}

.dock-folder {
    width: 69px;
    margin-right: 11px;
}

.dock-missing {
    width: 40px;
    margin-right: 8px;
    font-family: Inter, sans-serif;
    font-size: 92px;
    font-weight: 200;
    line-height: 66px;
    text-align: center;
    color: #f6d5c0;
}

.dock-doc {
    width: 78px;
    margin-right: -4px;
}

.dock-trash {
    width: 58px;
}

.cal-month {
    font: 600 14px Inter, sans-serif;
    fill: #fff;
    text-anchor: middle;
}

.cal-day {
    font: 300 36px Inter, sans-serif;
    fill: #2b2b2b;
    text-anchor: middle;
}

.tv-label {
    font: 500 30px Inter, sans-serif;
    fill: #fff;
    text-anchor: middle;
}

.word-w {
    font: 500 20px "Liberation Sans", sans-serif;
    fill: #fff;
    text-anchor: middle;
}

.term-prompt {
    font: 400 16px "DejaVu Sans Mono", monospace;
    fill: #fff;
}
```
